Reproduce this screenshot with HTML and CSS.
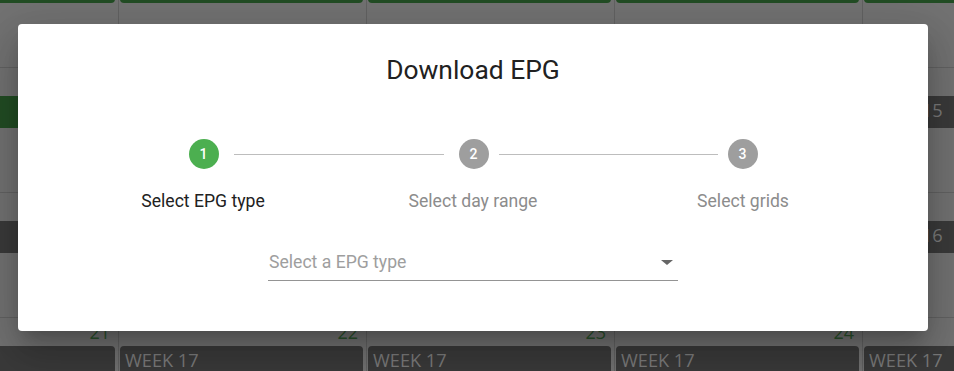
FILE: index.html
```html
<!DOCTYPE html>
<html lang="en">

<head>
    <meta charset="UTF-8">
    <title>Download EPG</title>
    <link rel="stylesheet" href="styles.css">
</head>

<body>

    <div class="calendar">
        <div class="cell"><div class="date">0</div><div class="bar green">WEEK 14</div></div>
        <div class="cell"><div class="date">1</div><div class="bar green">WEEK 14</div></div>
        <div class="cell"><div class="date">2</div><div class="bar green">WEEK 14</div></div>
        <div class="cell"><div class="date">3</div><div class="bar green">WEEK 14</div></div>
        <div class="cell"><div class="date">4</div><div class="bar green">WEEK 14</div></div>

        <div class="cell"><div class="date">7</div><div class="bar green">WEEK 15</div></div>
        <div class="cell"><div class="date">8</div><div class="bar">WEEK 15</div></div>
        <div class="cell"><div class="date">9</div><div class="bar">WEEK 15</div></div>
        <div class="cell"><div class="date">10</div><div class="bar">WEEK 15</div></div>
        <div class="cell"><div class="date">11</div><div class="bar">WEEK 15</div></div>

        <div class="cell"><div class="date">14</div><div class="bar">WEEK 16</div></div>
        <div class="cell"><div class="date">15</div><div class="bar">WEEK 16</div></div>
        <div class="cell"><div class="date">16</div><div class="bar">WEEK 16</div></div>
        <div class="cell"><div class="date">17</div><div class="bar">WEEK 16</div></div>
        <div class="cell"><div class="date">18</div><div class="bar">WEEK 16</div></div>

        <div class="cell"><div class="date">21</div><div class="bar">WEEK 17</div></div>
        <div class="cell"><div class="date">22</div><div class="bar">WEEK 17</div></div>
        <div class="cell"><div class="date">23</div><div class="bar">WEEK 17</div></div>
        <div class="cell"><div class="date">24</div><div class="bar">WEEK 17</div></div>
        <div class="cell"><div class="date">25</div><div class="bar">WEEK 17</div></div>
    </div>

    <div class="dialog">
        <h2 class="dialog-title">Download EPG</h2>

        <div class="stepper">
            <div class="step-row">
                <span class="step-num active">1</span>
                <span class="connector first"></span>
                <span class="step-num">2</span>
                <span class="connector second"></span>
                <span class="step-num">3</span>
            </div>
            <div class="step-labels">
                <span class="active">Select EPG type</span>
                <span>Select day range</span>
                <span>Select grids</span>
            </div>
        </div>

        <div class="select">
            <span class="placeholder">Select a EPG type</span>
            <span class="arrow"></span>
        </div>
    </div>

</body>

</html>
```

FILE: styles.css
```css
* {
    margin: 0;
    padding: 0;
    box-sizing: border-box;
}

body {
    width: 954px;
    height: 371px;
    overflow: hidden;
    position: relative;
    background: #727272;
    font-family: Roboto, sans-serif;
}

/* page behind the dialog, already dimmed */
.calendar {
    display: grid;
    grid-template-columns: repeat(5, 248px);
    grid-auto-rows: 125px;
    margin: -58px 0 0 -130px;
    font-family: "Open Sans", sans-serif;
}

.cell {
    border-top: 1px solid #626262;
    border-left: 1px solid #626262;
    background: #727272;
}

.date {
    height: 28px;
    line-height: 28px;
    font-size: 18px;
    text-align: right;
    padding-right: 8px;
    color: #2c522e;
}

.bar {
    height: 32px;
    margin: 0 3px 0 1px;
    padding: 2px 0 0 5px;
    border-radius: 4px;
    background: #3a3a3a;
    color: #7a7a7a;
    font-size: 18.2px;
    line-height: 24px;
}

.bar.green {
    background: #224d24;
    color: #5f8a60;
}

.dialog {
    position: absolute;
    left: 18px;
    top: 24px;
    width: 910px;
    height: 307px;
    padding-top: 30px;
    background: #fff;
    border-radius: 4px;
    box-shadow: 0 11px 15px -7px rgba(0, 0, 0, 0.2),
        0 24px 38px 3px rgba(0, 0, 0, 0.14),
        0 9px 46px 8px rgba(0, 0, 0, 0.12);
}

.dialog-title {
    text-align: center;
    font-size: 26.4px;
    font-weight: 400;
    line-height: 32px;
    color: #212121;
}

.stepper {
    width: 810px;
    margin: 53px auto 0;
}

.step-row {
    display: flex;
    justify-content: center;
    align-items: center;
}

.step-num {
    width: 30px;
    height: 30px;
    border-radius: 50%;
    background: #9e9e9e;
    color: #fff;
    font-size: 14px;
    font-weight: 500;
    line-height: 30px;
    text-align: center;
}

.step-num.active {
    background: #4caf50;
}

.connector {
    height: 1px;
    background: #bdbdbd;
}

.connector.first {
    width: 210px;
    margin: 0 15px;
}

.connector.second {
    width: 219px;
    margin: 0 10px;
}

.step-labels {
    display: grid;
    grid-template-columns: repeat(3, 1fr);
    margin-top: 19px;
    text-align: center;
    font-size: 17.6px;
    line-height: 26px;
    color: #8c8c8c;
}

.step-labels .active {
    color: #212121;
}

.select {
    width: 410px;
    margin: 35px auto 0;
    padding-bottom: 5px;
    display: flex;
    justify-content: space-between;
    align-items: center;
    border-bottom: 1px solid #949494;
}

.placeholder {
    padding-left: 1px;
    font-size: 17.6px;
    line-height: 26px;
    color: #9e9e9e;
}

.arrow {
    width: 0;
    height: 0;
    margin-right: 5px;
    border-left: 6.5px solid transparent;
    border-right: 6.5px solid transparent;
    border-top: 5.5px solid #666;
}
```
